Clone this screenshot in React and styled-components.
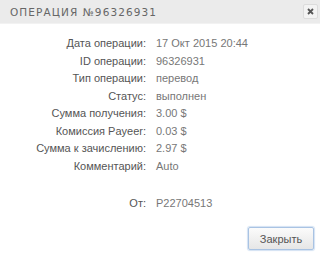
import React from "react";
import styled, { createGlobalStyle } from "styled-components";

const Global = createGlobalStyle`
  html, body { margin: 0; padding: 0; background: #fff; }
  body { font-family: "Liberation Sans", Arial, sans-serif; }
`;

const Dialog = styled.div`
  width: 320px;
  height: 255px;
  background: #fff;
  display: flex;
  flex-direction: column;
`;

const Header = styled.div`
  height: 23px;
  background: #ebebeb;
  display: flex;
  align-items: center;
  justify-content: space-between;
  padding: 0 2px 0 10px;
  border-bottom: 1px solid #f2f2f2;
`;

const Title = styled.div`
  font-family: "DejaVu Sans", sans-serif;
  font-size: 10.5px;
  letter-spacing: 1.1px;
  color: #666;
  text-transform: uppercase;
  padding-top: 1px;
`;

const CloseBtn = styled.button`
  width: 15px;
  height: 15px;
  padding: 0;
  border: 1px solid #dcdcdc;
  border-radius: 2px;
  background: #f3f3f3;
  display: flex;
  align-items: center;
  justify-content: center;
  color: #555;
`;

const Body = styled.div`
  flex: 1;
  display: flex;
  flex-direction: column;
  padding-top: 11px;
`;

const Grid = styled.div`
  display: grid;
  grid-template-columns: 146px 1fr;
  column-gap: 10px;
  font-size: 11px;
`;

const Label = styled.div`
  text-align: right;
  color: #555;
  line-height: 17.5px;
  height: ${(p) => (p.$tall ? "37px" : "17.5px")};
  display: flex;
  align-items: flex-end;
  justify-content: flex-end;
`;

const Value = styled.div`
  color: #777;
  line-height: 17.5px;
  height: ${(p) => (p.$tall ? "37px" : "17.5px")};
  display: flex;
  align-items: flex-end;
`;

const Footer = styled.div`
  display: flex;
  justify-content: flex-end;
  padding: 15px 6px 0 0;
`;

const Button = styled.button`
  width: 66px;
  height: 23px;
  border: 1px solid #a9c3e3;
  box-shadow: 0 0 1px 1px #d3e2f3;
  border-radius: 2px;
  background: linear-gradient(#fbfbfb, #e6e6e6);
  font-family: "Liberation Sans", Arial, sans-serif;
  font-size: 11px;
  color: #555;
  padding: 0;
`;

const rows = [
  ["Дата операции:", "17 Окт 2015 20:44"],
  ["ID операции:", "96326931"],
  ["Тип операции:", "перевод"],
  ["Статус:", "выполнен"],
  ["Сумма получения:", "3.00 $"],
  ["Комиссия Payeer:", "0.03 $"],
  ["Сумма к зачислению:", "2.97 $"],
  ["Комментарий:", "Auto"],
];

export default function App() {
  return (
    <>
      <Global />
      <Dialog>
        <Header>
          <Title>Операция №96326931</Title>
          <CloseBtn aria-label="close">
            <svg width="7" height="7" viewBox="0 0 7 7">
              <path d="M1 1L6 6M6 1L1 6" stroke="#555" strokeWidth="1.8" />
            </svg>
          </CloseBtn>
        </Header>
        <Body>
          <Grid>
            {rows.map(([l, v]) => (
              <React.Fragment key={l}>
                <Label>{l}</Label>
                <Value>{v}</Value>
              </React.Fragment>
            ))}
            <Label $tall>От:</Label>
            <Value $tall>P22704513</Value>
          </Grid>
          <Footer>
            <Button>Закрыть</Button>
          </Footer>
        </Body>
      </Dialog>
    </>
  );
}
